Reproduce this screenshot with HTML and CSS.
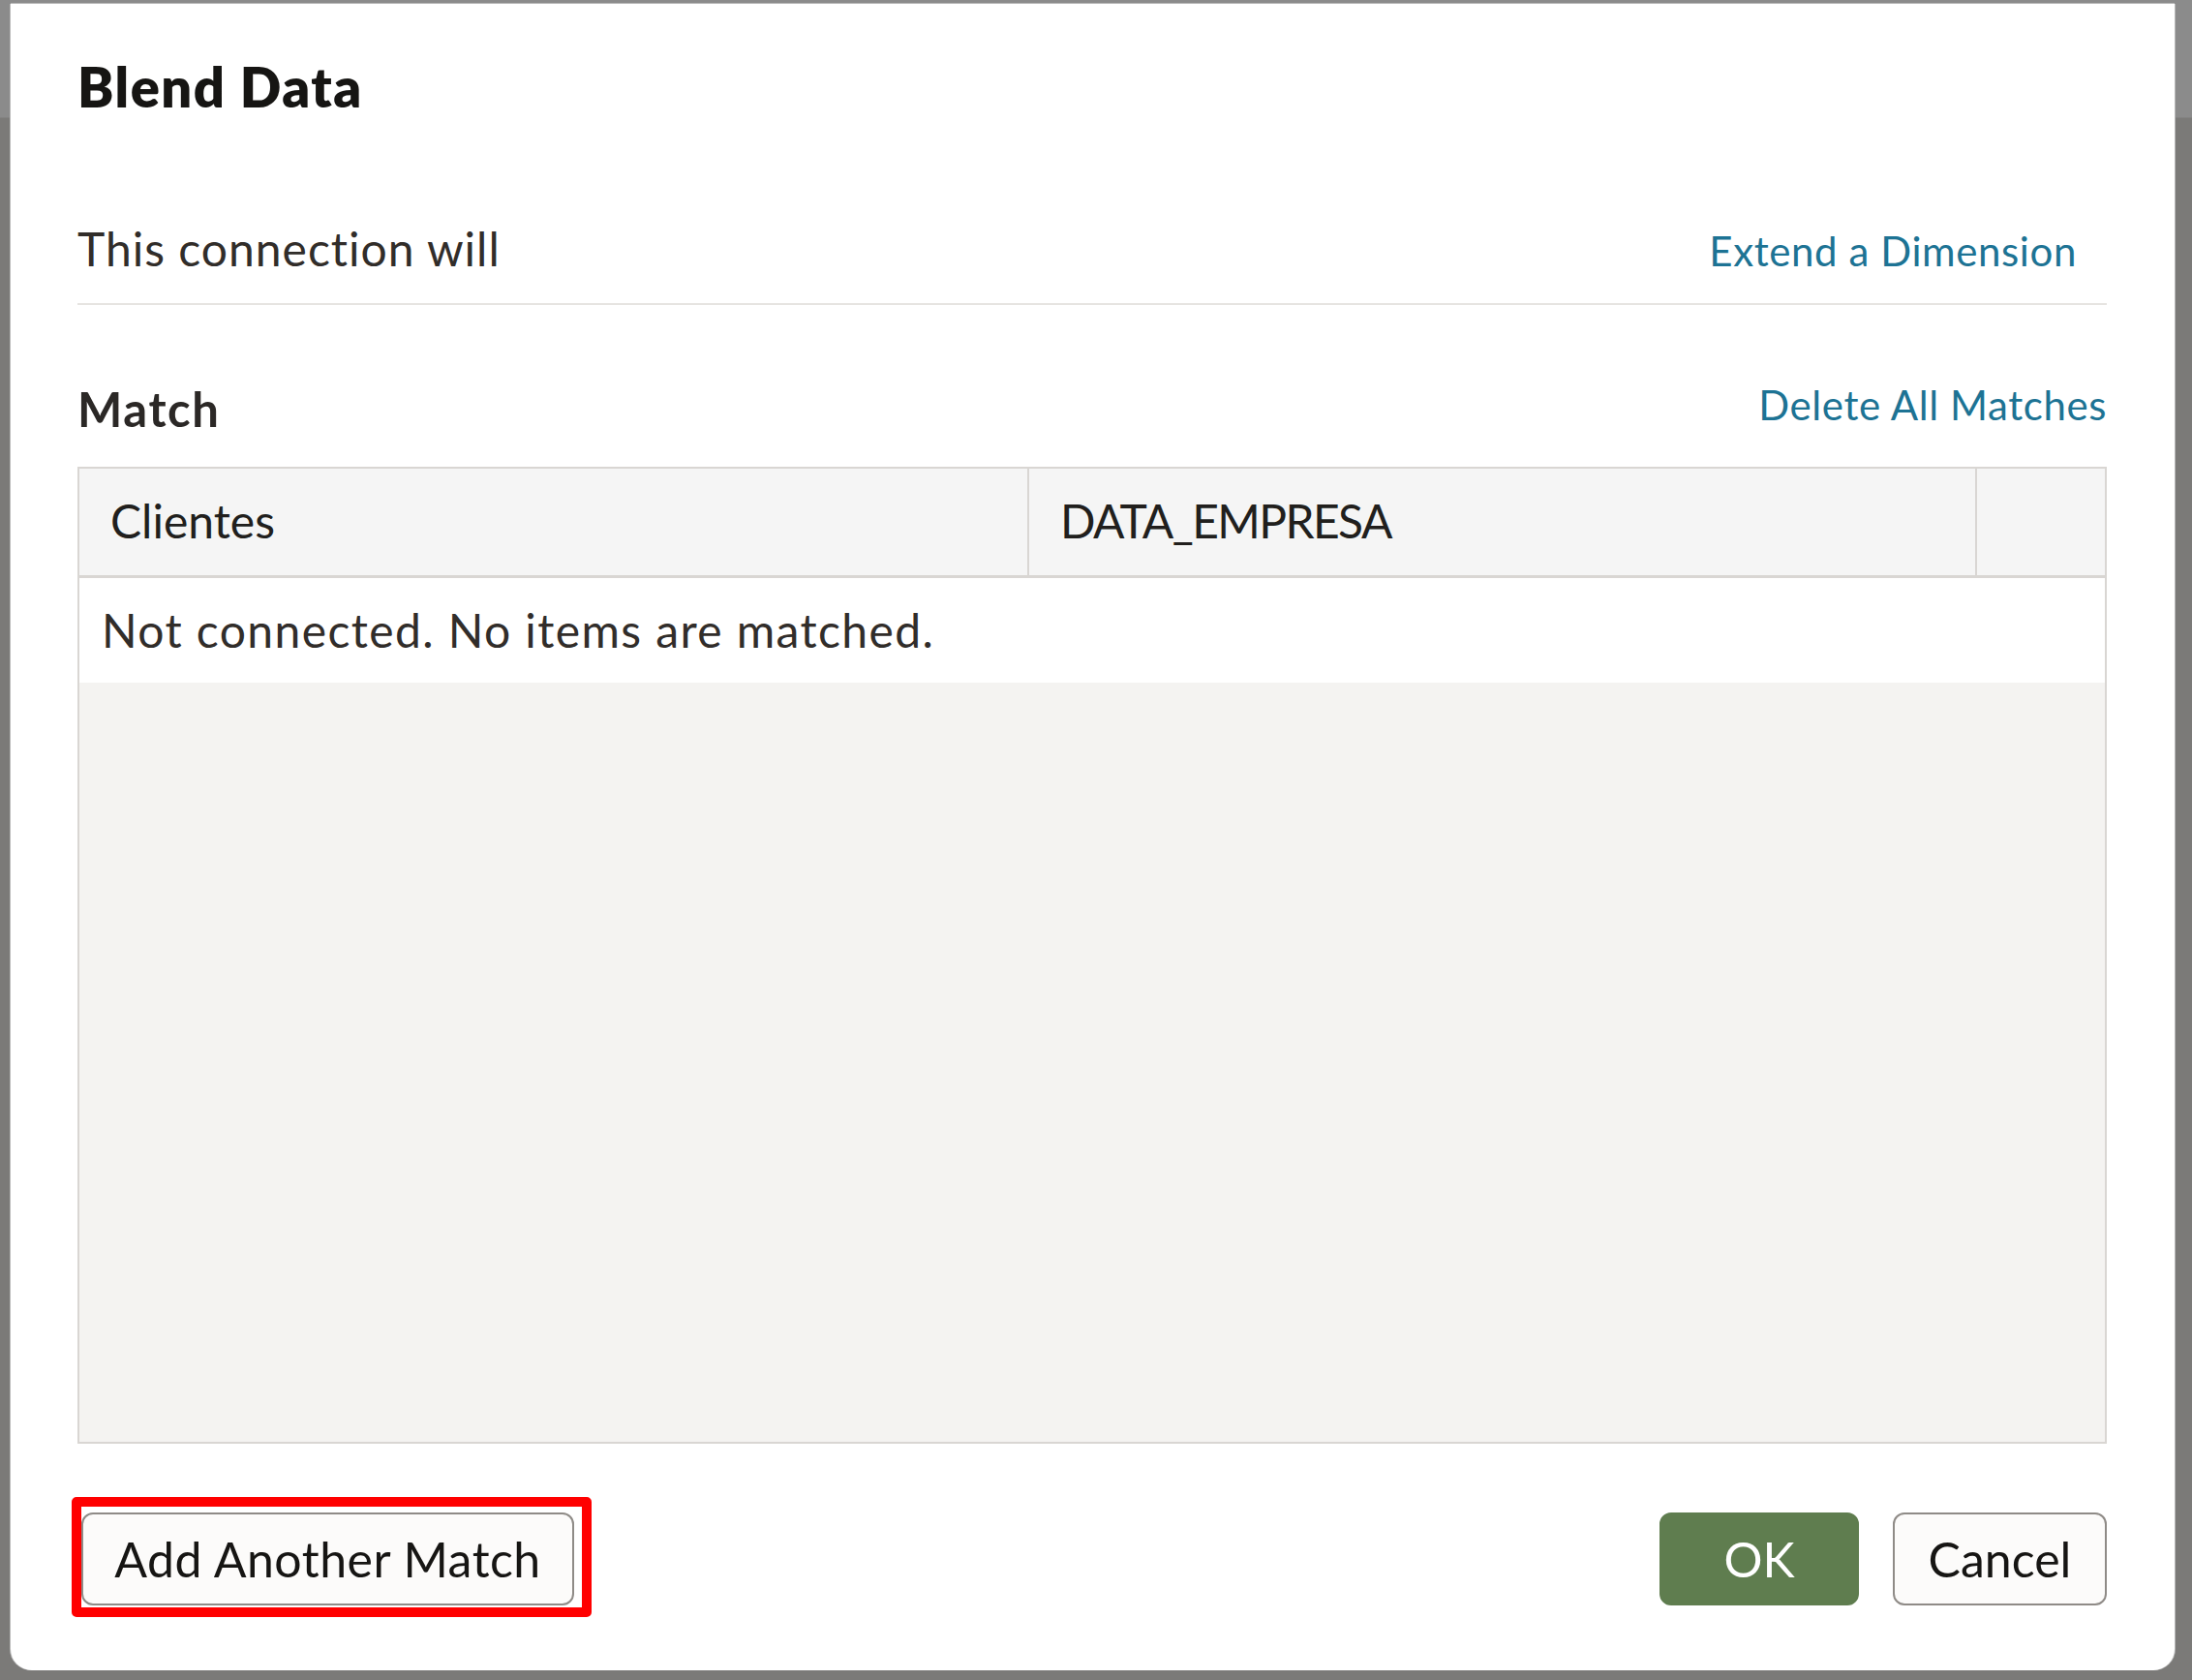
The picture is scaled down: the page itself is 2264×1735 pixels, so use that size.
FILE: index.html
```html
<!DOCTYPE html>
<html lang="en">
<head>
<meta charset="utf-8">
<title>Blend Data</title>
<link rel="stylesheet" href="styles.css">
</head>
<body>
<div class="dialog">
  <h1 class="dialog-title">Blend Data</h1>

  <div class="connection-row">
    <span class="connection-label">This connection will</span>
    <a class="link link-extend" href="#">Extend a Dimension</a>
  </div>

  <div class="match-row">
    <h2 class="match-title">Match</h2>
    <a class="link" href="#">Delete All Matches</a>
  </div>

  <div class="match-table">
    <div class="table-head">
      <div class="head-cell">Clientes</div>
      <div class="head-cell head-cell-caps">DATA_EMPRESA</div>
      <div class="head-cell head-cell-last"></div>
    </div>
    <div class="table-row">Not connected. No items are matched.</div>
    <div class="table-empty"></div>
  </div>

  <div class="dialog-footer">
    <div class="highlight">
      <button class="btn btn-add" type="button">Add Another Match</button>
    </div>
    <div class="footer-actions">
      <button class="btn btn-ok" type="button">OK</button>
      <button class="btn btn-cancel" type="button">Cancel</button>
    </div>
  </div>
</div>
</body>
</html>
```

FILE: styles.css
```css
html, body {
  margin: 0;
  padding: 0;
}

body {
  width: 2264px;
  height: 1735px;
  overflow: hidden;
  background: linear-gradient(to bottom, #8b8b8b 0, #8b8b8b 121px, #7b7a78 122px, #7b7a78 100%);
  font-family: Lato, "Open Sans", "Liberation Sans", sans-serif;
  color: #312d2a;
}

.dialog {
  box-sizing: border-box;
  margin: 4px 0 0 11px;
  width: 2235px;
  height: 1721px;
  background: #ffffff;
  border-radius: 0 0 22px 22px;
  box-shadow: -1px 0 0 #b9b9b9, 1px 0 0 #b9b9b9, 0 -1px 0 #b9b9b9;
  padding: 52px 70px 0 69px;
  display: flex;
  flex-direction: column;
}

.dialog-title {
  margin: 0;
  font-size: 56px;
  line-height: 1.2;
  font-weight: 800;
  letter-spacing: 1.5px;
  color: #161513;
}

.connection-row {
  margin-top: 105px;
  display: flex;
  align-items: baseline;
  justify-content: space-between;
  padding-bottom: 27px;
  border-bottom: 2px solid #e6e4e1;
}

.connection-label {
  font-size: 48px;
  line-height: 1.2;
  letter-spacing: 1px;
  color: #312d2a;
}

.link {
  font-size: 42px;
  line-height: 1.2;
  letter-spacing: 0.6px;
  color: #1d7394;
  text-decoration: none;
}

.link-extend {
  margin-right: 31px;
}

.match-row {
  margin-top: 78px;
  display: flex;
  align-items: flex-start;
  justify-content: space-between;
}

.match-title {
  margin: 0;
  font-size: 49px;
  line-height: 1.2;
  font-weight: 700;
  letter-spacing: 1.6px;
  color: #2b2826;
}

.match-table {
  box-sizing: border-box;
  margin-top: 30px;
  height: 1009px;
  border: 2px solid #d9d6d3;
  display: flex;
  flex-direction: column;
}

.table-head {
  display: grid;
  grid-template-columns: 981px 979px 1fr;
  background: #f5f5f5;
  border-bottom: 3px solid #d9d6d3;
}

.head-cell {
  box-sizing: border-box;
  height: 110px;
  padding: 25px 0 0 32px;
  font-size: 48px;
  line-height: 1.2;
  color: #211f1d;
  border-right: 2px solid #d9d6d3;
}

.head-cell-caps {
  letter-spacing: -1.6px;
}

.head-cell-last {
  border-right: none;
}

.table-row {
  box-sizing: border-box;
  height: 108px;
  padding: 25px 0 0 23px;
  font-size: 48px;
  line-height: 1.2;
  letter-spacing: 1.4px;
  color: #312d2a;
  background: #ffffff;
}

.table-empty {
  flex: 1;
  background: #f4f3f1;
}

.dialog-footer {
  margin-top: 55px;
  display: flex;
  justify-content: space-between;
  align-items: flex-start;
}

.highlight {
  margin-left: -6px;
  border: 10px solid #ff0000;
  border-radius: 5px;
  padding: 6px 8px 2px 0;
  display: flex;
}

.footer-actions {
  margin-top: 16px;
  display: flex;
  gap: 35px;
}

.btn {
  box-sizing: border-box;
  height: 96px;
  border-radius: 12px;
  font-family: Lato, "Open Sans", "Liberation Sans", sans-serif;
  font-size: 50px;
  line-height: 1.2;
  padding: 0;
  display: flex;
  align-items: center;
  justify-content: center;
  cursor: pointer;
}

.btn-add,
.btn-cancel {
  background: #fcfbfa;
  border: 2px solid #8f8b87;
  color: #161513;
}

.btn-add {
  width: 509px;
  letter-spacing: 0.5px;
}

.btn-cancel {
  width: 221px;
}

.btn-ok {
  width: 206px;
  background: #5f7d4f;
  border: 2px solid #5f7d4f;
  color: #ffffff;
}
```
